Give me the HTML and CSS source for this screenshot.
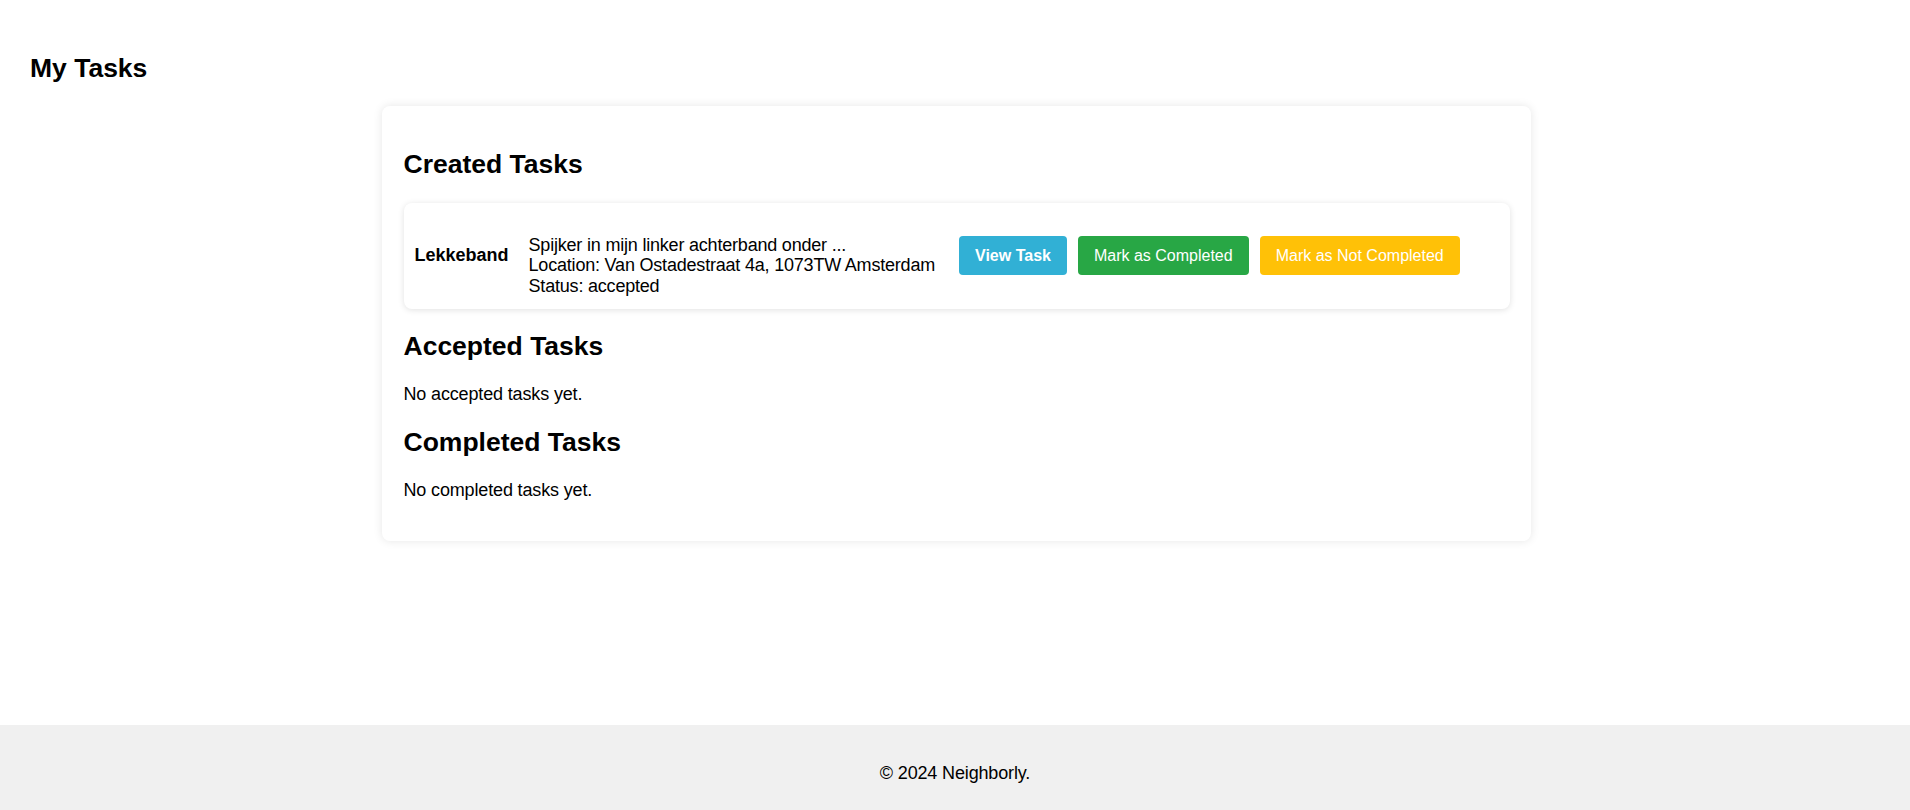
FILE: index.html
```html
<!DOCTYPE html>
<html lang="en">
<head>
<meta charset="utf-8">
<title>My Tasks</title>
<link rel="stylesheet" href="styles.css">
</head>
<body>
<main class="page">
  <h1 class="page-title">My Tasks</h1>
  <section class="panel">
    <h2 class="section-title">Created Tasks</h2>
    <div class="task-card">
      <div class="task-name">Lekkeband</div>
      <div class="task-info">
        <div>Spijker in mijn linker achterband onder ...</div>
        <div>Location: Van Ostadestraat 4a, 1073TW Amsterdam</div>
        <div>Status: accepted</div>
      </div>
      <div class="task-actions">
        <button class="btn btn-view">View Task</button>
        <button class="btn btn-complete">Mark as Completed</button>
        <button class="btn btn-notcomplete">Mark as Not Completed</button>
      </div>
    </div>
    <h2 class="section-title">Accepted Tasks</h2>
    <p class="empty">No accepted tasks yet.</p>
    <h2 class="section-title">Completed Tasks</h2>
    <p class="empty">No completed tasks yet.</p>
  </section>
</main>
<footer class="footer">
  <p>&copy; 2024 Neighborly.</p>
</footer>
</body>
</html>
```
FILE: styles.css
```css
* { box-sizing: border-box; }
html, body { margin: 0; padding: 0; }
body {
  font-family: "Liberation Sans", Arial, sans-serif;
  font-size: 18px;
  color: #000;
  background: #fff;
}
.page {
  min-height: 725px;
  padding: 53px 0 0 0;
  display: flex;
  flex-direction: column;
}
.page-title {
  margin: 0 0 23px 30px;
  font-size: 26.5px;
  line-height: 30px;
  font-weight: bold;
}
.panel {
  width: 1149px;
  align-self: center;
  margin-left: 2px;
  background: #fff;
  border-radius: 8px;
  box-shadow: 0 0 10px rgba(0,0,0,0.1);
  padding: 21px 21px 22px 22px;
}
.section-title {
  font-size: 26.5px;
  line-height: 32px;
  margin: 21px 0 22.5px;
  font-weight: bold;
}
.task-card {
  display: flex;
  align-items: center;
  background: #fff;
  border-radius: 8px;
  box-shadow: 0 1px 6px rgba(0,0,0,0.12);
  padding: 12px 11px;
}
.task-name {
  font-weight: bold;
  margin-right: 20px;
}
.task-info {
  line-height: 20.7px;
  padding-top: 20px;
  letter-spacing: -0.2px;
  margin-right: 24px;
}
.task-actions {
  display: flex;
  gap: 11px;
}
.btn {
  font-family: "Liberation Sans", Arial, sans-serif;
  font-size: 16px;
  line-height: 19px;
  padding: 10px 16px;
  border: none;
  border-radius: 4px;
  color: #fff;
  cursor: pointer;
}
.btn-view { background: #31b0d5; font-weight: bold; }
.btn-complete { background: #28a745; }
.btn-notcomplete { background: #ffc107; }
.empty {
  margin: 18px 0;
  line-height: 20.7px;
  letter-spacing: -0.15px;
}
.footer {
  background: #f0f0f0;
  padding: 20px;
  text-align: center;
}
.footer p {
  margin: 18px 0;
  line-height: 20.7px;
  letter-spacing: -0.15px;
}
```
